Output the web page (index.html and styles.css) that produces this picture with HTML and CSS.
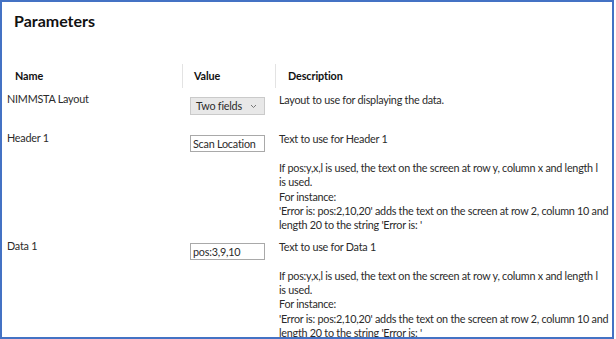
FILE: index.html
```html
<!DOCTYPE html>
<html>
<head>
<meta charset="utf-8">
<link rel="stylesheet" href="styles.css">
</head>
<body>
<div class="frame">
  <h1 class="title">Parameters</h1>
  <div class="table">
    <div class="head name-h">Name</div>
    <div class="head val-h">Value</div>
    <div class="head desc-h">Description</div>

    <div class="cell name first">NIMMSTA Layout</div>
    <div class="cell val first">
      <div class="select"><span>Two fields</span><svg class="chev" width="7" height="5" viewBox="0 0 7 5"><path d="M1 1 L3.5 3.5 L6 1" fill="none" stroke="#777" stroke-width="1"/></svg></div>
    </div>
    <div class="cell desc first"><p>Layout to use for displaying the data.</p></div>

    <div class="cell name">Header 1</div>
    <div class="cell val"><div class="input">Scan Location</div></div>
    <div class="cell desc">
      <p>Text to use for Header 1</p>
      <p>If pos:y,x,l is used, the text on the screen at row y, column x and length l<br>is used.<br>For instance:<br>'Error is: pos:2,10,20' adds the text on the screen at row 2, column 10 and<br>length 20 to the string 'Error is: '</p>
    </div>

    <div class="cell name">Data 1</div>
    <div class="cell val"><div class="input">pos:3,9,10</div></div>
    <div class="cell desc">
      <p>Text to use for Data 1</p>
      <p>If pos:y,x,l is used, the text on the screen at row y, column x and length l<br>is used.<br>For instance:<br>'Error is: pos:2,10,20' adds the text on the screen at row 2, column 10 and<br>length 20 to the string 'Error is: '</p>
    </div>
  </div>
</div>
</body>
</html>
```

FILE: styles.css
```css
html, body {
  margin: 0;
  padding: 0;
  background: #ffffff;
}
.frame {
  box-sizing: border-box;
  width: 614px;
  height: 339px;
  border: 2px solid #4472c4;
  padding: 0 0 0 5px;
  overflow: hidden;
  font-family: Lato, "Open Sans", sans-serif;
  font-size: 10.8px;
  letter-spacing: -0.22px;
  color: #2b2b2b;
}
.title {
  margin: 6px 0 0 7px;
  font-size: 16px;
  letter-spacing: 0;
  font-weight: 700;
  line-height: 26px;
  color: #111;
}
.table {
  display: grid;
  grid-template-columns: 175px 93px 1fr;
  margin-top: 30px;
}
.head {
  font-weight: 700;
  font-size: 10.8px;
  letter-spacing: -0.1px;
  line-height: 24px;
  color: #111;
  margin-bottom: 4px;
}
.name-h { padding-left: 8px; }
.val-h { padding-left: 11px; border-left: 1px solid #e3e3e3; }
.desc-h { padding-left: 12px; border-left: 1px solid #e3e3e3; }
.cell {
  box-sizing: border-box;
  line-height: 14.4px;
  padding-bottom: 6px;
}
.first { min-height: 39px; }
.name { padding-top: 0; }
.val { padding-left: 8px; padding-top: 4px; }
.val.first { padding-top: 5px; }
.desc { padding-left: 4px; padding-top: 1px; white-space: nowrap; letter-spacing: -0.25px; }
.desc p { margin: 0 0 14.4px 0; }
.desc p:last-child { margin-bottom: 0; }
.select {
  box-sizing: border-box;
  width: 75px;
  height: 18px;
  border: 1px solid #cacaca;
  background: #e8e8e8;
  display: flex;
  align-items: center;
  justify-content: space-between;
  padding: 0 7px 0 5px;
  line-height: 16px;
}
.chev { display: block; }
.input {
  box-sizing: border-box;
  width: 75px;
  height: 17px;
  border: 1px solid #a9a9a9;
  background: #fff;
  padding: 0 2px;
  line-height: 15px;
  white-space: nowrap;
  overflow: hidden;
}
```
